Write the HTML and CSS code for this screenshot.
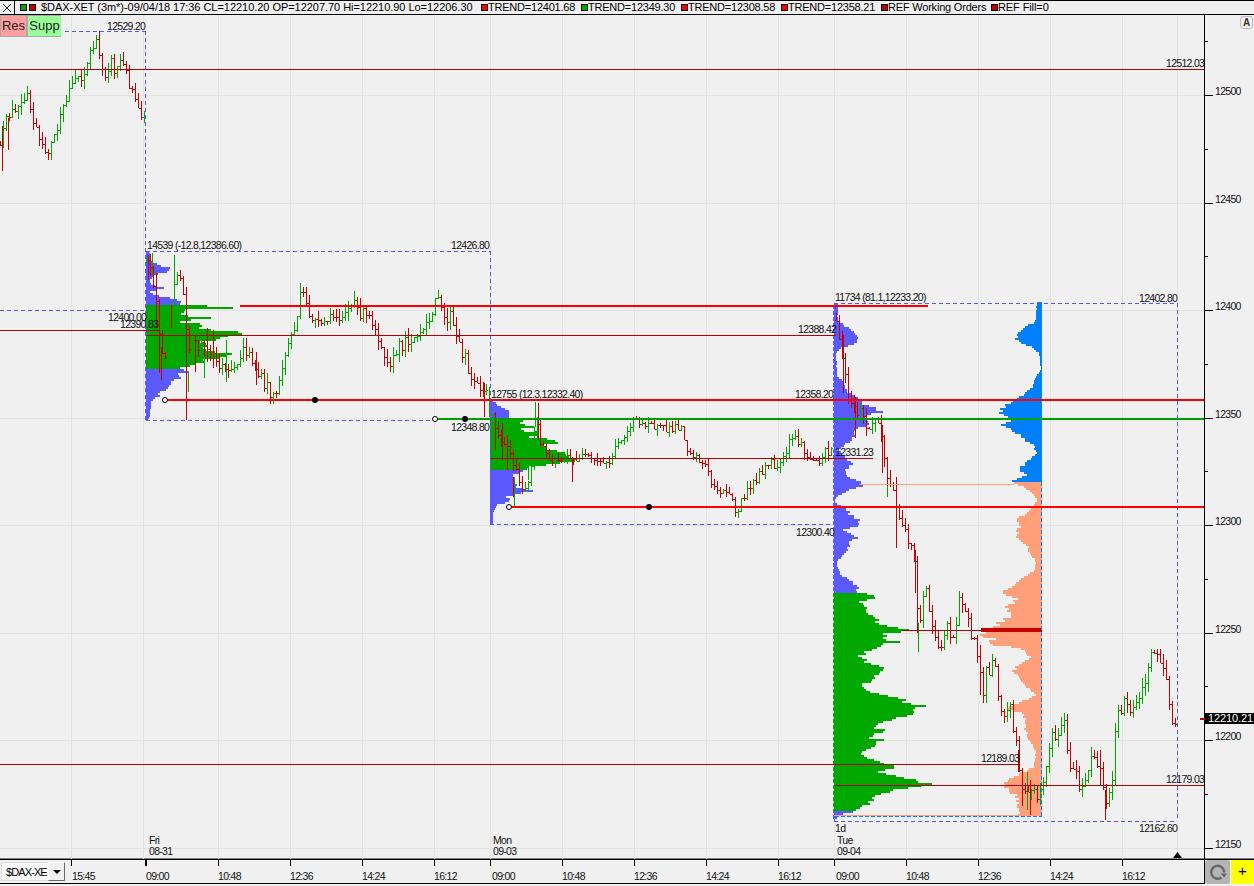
FILE: index.html
```html
<!DOCTYPE html>
<html lang="en">
<head>
    <meta charset="UTF-8">
    <title>$DAX-XET (3m*)</title>
    <link rel="stylesheet" href="styles.css">
</head>
<body>
    <div class="topbar">
        <div class="close-box">
            <svg width="10" height="10" viewBox="0 0 10 10"><path d="M1 1L9 9M9 1L1 9" stroke="#222" fill="none"/></svg>
        </div>
        <span class="swatch green first"></span>
        <span class="swatch darkred second"></span>
        <span class="legend main">$DAX-XET (3m*)-09/04/18 17:36 CL=12210.20 OP=12207.70 Hi=12210.90 Lo=12206.30</span>
        <span class="swatch red"></span><span class="legend trend">TREND=12401.68</span>
        <span class="swatch green"></span><span class="legend trend">TREND=12349.30</span>
        <span class="swatch red"></span><span class="legend trend">TREND=12308.58</span>
        <span class="swatch red"></span><span class="legend trend">TREND=12358.21</span>
        <span class="swatch darkred"></span><span class="legend orders">REF Working Orders</span>
        <span class="swatch darkred"></span><span class="legend">REF Fill=0</span>
    </div>

    <div class="chart">
        <svg id="plot" width="1254" height="844" viewBox="0 15 1254 844"></svg>
        <div class="toggles">
            <div class="toggle res">Res</div>
            <div class="toggle supp">Supp</div>
        </div>
        <div class="auto-btn">A</div>
    </div>

    <div class="bottombar">
        <div class="combo">
            <span class="combo-text">$DAX-XE</span>
            <span class="combo-arrow"></span>
        </div>
        <div class="timeaxis">
            <svg id="times" width="1138" height="23" viewBox="66 860 1138 23"></svg>
        </div>
        <div class="refresh">
            <svg width="20" height="20" viewBox="0 0 20 20">
                <path d="M13.5 15.5A6.5 6.5 0 1 1 16.2 10.5" fill="none" stroke="#666" stroke-width="2.4"/>
                <path d="M12.5 11.5L19 11.5L16.2 15.5Z" fill="#666"/>
            </svg>
        </div>
        <div class="plus">+</div>
    </div>

    <script src="script.js"></script>
</body>
</html>
```

FILE: styles.css
```css
* {
    box-sizing: border-box;
}

html, body {
    margin: 0;
    height: 100%;
    overflow: hidden;
}

body {
    width: 1254px;
    height: 886px;
    display: flex;
    flex-direction: column;
    background-color: #f0f0f0;
    font-family: "Liberation Sans", Arial, sans-serif;
    color: #000;
}

/* legend strip */
.topbar {
    height: 15px;
    flex: none;
    display: flex;
    align-items: center;
    border-top: 1px solid #000;
    border-bottom: 1px solid #000;
    font-size: 11px;
    line-height: 13px;
    white-space: nowrap;
}

.close-box {
    width: 15px;
    height: 13px;
    flex: none;
    display: flex;
    align-items: center;
    justify-content: center;
    border-right: 1px solid #000;
}

.swatch {
    width: 7px;
    height: 7px;
    flex: none;
    border: 1px solid #000;
}

.swatch.first {
    margin-left: 5px;
    margin-right: 2px;
}

.swatch.second {
    margin-right: 5px;
}

.swatch.green { background-color: #00a800; }
.swatch.red { background-color: #ff0000; }
.swatch.darkred { background-color: #c00000; }

.legend {
    letter-spacing: -0.1px;
}

.legend.main {
    width: 440px;
    letter-spacing: -0.04px;
}

.legend.trend {
    width: 93px;
    letter-spacing: -0.22px;
}

.legend.orders {
    width: 103px;
    letter-spacing: -0.2px;
}

/* chart */
.chart {
    position: relative;
    height: 844px;
    flex: none;
}

#plot {
    display: block;
}

#plot text, #times text {
    font-family: "Liberation Sans", Arial, sans-serif;
    font-size: 10.5px;
    letter-spacing: -0.7px;
    fill: #111;
}

#plot text.price-now {
    fill: #fff;
    font-size: 11px;
    letter-spacing: -0.1px;
}

.toggles {
    position: absolute;
    left: 0;
    top: 0;
    display: flex;
    height: 22px;
    padding: 1px 0 1px 1px;
    background-color: #a8a8a8;
}

.toggle {
    font-size: 13px;
    line-height: 20px;
    text-align: center;
    color: #222;
}

.toggle.res {
    width: 25px;
    margin-right: 2px;
    background-color: #ff9f9f;
}

.toggle.supp {
    width: 33px;
    background-color: #99ff99;
}

.auto-btn {
    position: absolute;
    left: 1240px;
    top: 1px;
    width: 13px;
    height: 13px;
    font-size: 10px;
    line-height: 11px;
    text-align: center;
    font-weight: bold;
    color: #333;
    border: 1px solid #bbb;
    border-radius: 3px;
}

/* bottom strip */
.bottombar {
    height: 27px;
    flex: none;
    display: flex;
    border-top: 1px solid #000;
    box-shadow: 0 -1px 0 #808080;
    background-color: #f0f0f0;
    align-items: flex-start;
}

.combo {
    width: 66px;
    height: 24px;
    flex: none;
    display: flex;
    align-items: center;
    padding: 2px 1px;
    border-bottom: 1px solid #000;
}

.combo-text {
    width: 47px;
    height: 19px;
    padding-left: 4px;
    font-size: 11px;
    line-height: 18px;
    overflow: hidden;
    letter-spacing: -0.9px;
    background-color: #fafafa;
    border: 1px solid #ddd;
    border-right: none;
    white-space: nowrap;
}

.combo-arrow {
    width: 17px;
    height: 19px;
    position: relative;
    border: 1px solid #666;
    border-top-color: #fff;
    border-left-color: #fff;
}

.combo-arrow::after {
    content: "";
    position: absolute;
    left: 4px;
    top: 7px;
    border-left: 4px solid transparent;
    border-right: 4px solid transparent;
    border-top: 4px solid #000;
}

.timeaxis {
    width: 1139px;
    height: 24px;
    flex: none;
    border-bottom: 1px solid #000;
    border-right: 1px solid #000;
}

#times {
    display: block;
}

.refresh {
    width: 25px;
    height: 24px;
    flex: none;
    display: flex;
    align-items: center;
    justify-content: center;
    background-color: #b4b4b4;
    border-radius: 3px;
}

.plus {
    width: 23px;
    height: 24px;
    flex: none;
    margin-left: 1px;
    background-color: #ffff00;
    border-radius: 2px;
    text-align: center;
    font-size: 15px;
    line-height: 22px;
}
```

FILE: script.js
```js
const NS = 'http://www.w3.org/2000/svg';
const plot = document.getElementById('plot');
const times = document.getElementById('times');

const GREEN = '#00a800';
const RED = '#c80000';
const PURE_RED = '#ff0000';
const DASH_BLUE = '#5555ff';
const PROFILE_BLUE = '#5a5aff';
const BRIGHT_BLUE = '#0080ff';
const SALMON = '#ffa07a';

let seed = 12345;
function rnd() {
    seed = (seed * 16807) % 2147483647;
    return seed / 2147483647;
}

function add(parent, tag, attrs, text) {
    const el = document.createElementNS(NS, tag);
    for (const k in attrs) el.setAttribute(k, attrs[k]);
    if (text !== undefined) el.textContent = text;
    parent.appendChild(el);
    return el;
}

function line(x1, y1, x2, y2, color, width, dash) {
    const attrs = { x1, y1, x2, y2, stroke: color, 'stroke-width': width || 1, 'shape-rendering': 'crispEdges' };
    if (dash) attrs['stroke-dasharray'] = dash;
    add(plot, 'line', attrs);
}

function label(x, y, text, cls) {
    add(plot, 'text', { x, y, class: cls || '' }, text);
}

// grid
const gridX = [71, 143, 218, 290, 362, 434, 490, 562, 634, 706, 778, 834, 906, 978, 1050, 1122, 1177];
const gridY = [95.5, 203.5, 310.5, 418.5, 525.5, 633.5, 740.5, 848.5];
gridX.forEach(x => line(x + 0.5, 15, x + 0.5, 859, '#e2e2e2'));
gridY.forEach(y => line(0, y, 1204, y, '#e2e2e2'));

// volume profiles: anchors are [y, width]
function interp(points, v) {
    for (let i = 0; i < points.length - 1; i++) {
        const a = points[i], b = points[i + 1];
        if (v >= a[0] && v <= b[0]) {
            return a[1] + (b[1] - a[1]) * (v - a[0]) / ((b[0] - a[0]) || 1);
        }
    }
    return v < points[0][0] ? points[0][1] : points[points.length - 1][1];
}

function drawProfile(anchors, x0, dir, colorOf) {
    const top = anchors[0][0], bottom = anchors[anchors.length - 1][0];
    const paths = {};
    for (let y = top; y < bottom; y += 2) {
        const w = Math.max(1, Math.round(interp(anchors, y + 1) * (0.88 + rnd() * 0.22)));
        const c = colorOf(y);
        const x = dir > 0 ? x0 : x0 - w;
        paths[c] = (paths[c] || '') + `M${x} ${y}h${w}v2h${-w}z`;
    }
    for (const c in paths) add(plot, 'path', { d: paths[c], fill: c, 'shape-rendering': 'crispEdges' });
}

drawProfile([[251, 3], [258, 4], [262, 8], [265, 12], [268, 22], [272, 22], [275, 8], [280, 4], [285, 6], [288, 19], [292, 4], [296, 12], [298, 26], [301, 30], [304, 36],
    [306, 60], [308, 88], [310, 42], [312, 35], [316, 38], [318, 60], [321, 32], [324, 50], [328, 55], [331, 80], [333, 98], [335, 92], [338, 80], [341, 55], [345, 62], [349, 55], [352, 72], [354, 85], [355, 92], [358, 70], [361, 60], [364, 55], [367, 38],
    [369, 35], [372, 40], [375, 30], [378, 36], [381, 28], [384, 25], [387, 26], [390, 20], [393, 12], [396, 14], [399, 8], [402, 5], [405, 5], [410, 4], [415, 4], [420, 2]],
    146, 1, y => (y >= 304 && y < 369 ? GREEN : PROFILE_BLUE));

drawProfile([[400, 2], [405, 8], [410, 17], [414, 20], [418, 20], [421, 32], [424, 33], [427, 42], [430, 32], [433, 50], [436, 44], [438, 36], [440, 75], [443, 66], [447, 53], [450, 56], [453, 73], [457, 86], [460, 80], [463, 73], [467, 43], [470, 40],
    [472, 30], [477, 24], [483, 24], [488, 30], [490, 45], [493, 30], [497, 17], [502, 20], [505, 7], [513, 3], [524, 3]],
    490, 1, y => (y >= 420 && y < 470 ? GREEN : PROFILE_BLUE));

drawProfile([[303, 4], [305, 5], [320, 5], [323, 8], [328, 15], [335, 26], [343, 26], [347, 10], [353, 3], [377, 4], [380, 10], [390, 13], [397, 22], [403, 30], [408, 40], [412, 48], [414, 40], [418, 30], [423, 37], [430, 23], [437, 22], [443, 15], [450, 5], [458, 13], [463, 19], [470, 13], [477, 15], [482, 27], [485, 32], [490, 17], [497, 3], [503, 2], [508, 12], [517, 20], [520, 26], [525, 26], [530, 10], [537, 26], [543, 17], [550, 15], [557, 8], [563, 3], [575, 8], [582, 20], [588, 26], [592, 26],
    [593, 37], [598, 40], [602, 26], [607, 35], [613, 37], [622, 43], [627, 58], [630, 70], [633, 58], [638, 48], [642, 62], [647, 48], [650, 37], [657, 26], [662, 35], [667, 46], [670, 52], [675, 42], [682, 35], [687, 28], [693, 43], [697, 57], [702, 73], [707, 95], [710, 87], [715, 77], [720, 58], [725, 43], [732, 50], [737, 37], [740, 48], [747, 37], [750, 32], [757, 30], [762, 52], [768, 57], [773, 47], [778, 77], [782, 90], [785, 102], [788, 80], [793, 48], [800, 40], [807, 30], [810, 24],
    [812, 20], [815, 7], [820, 2]],
    833, 1, y => (y >= 593 && y < 810 ? GREEN : PROFILE_BLUE));

drawProfile([[302, 5], [323, 7], [325, 14], [330, 19], [333, 24], [338, 26], [342, 22], [347, 10], [353, 3], [370, 1], [378, 7], [387, 10], [392, 15], [396, 21], [403, 34], [410, 45], [415, 39], [418, 29], [426, 42], [430, 33], [435, 24], [440, 17], [445, 9], [453, 5], [458, 10], [463, 17], [470, 22], [475, 15], [478, 26], [482, 28],
    [483, 29], [487, 19], [493, 10], [500, 4], [507, 10], [512, 14], [520, 26], [527, 22], [533, 25], [540, 24], [548, 14], [553, 12], [562, 6], [570, 8], [580, 21], [592, 38], [600, 25], [608, 36], [615, 31], [622, 41], [628, 50], [633, 60], [638, 53], [645, 48], [648, 21], [657, 12], [665, 21], [670, 30], [678, 21], [687, 15], [695, 6], [702, 21], [708, 38], [713, 21], [722, 15], [732, 17], [742, 11], [753, 6], [767, 8], [777, 28], [783, 41], [790, 36], [797, 25], [807, 25], [815, 25]],
    1042, -1, y => (y >= 482 ? SALMON : BRIGHT_BLUE));

add(plot, 'rect', { x: 834, y: 815, width: 208, height: 1, fill: SALMON });
add(plot, 'rect', { x: 981, y: 628, width: 61, height: 4, fill: '#c80000', 'shape-rendering': 'crispEdges' });

// price bars
let redBars = '';
let greenBars = '';

function pushBar(x, hi, lo, open, close, up) {
    const px = x + 0.5;
    let d = `M${px} ${hi}V${lo}`;
    if (open !== null) d += `M${x - 1} ${open}H${px}M${px} ${close}H${x + 2}`;
    if (up) greenBars += d; else redBars += d;
}

function drawSeries(points, step, noise, spread) {
    const first = points[0][0], last = points[points.length - 1][0];
    let prev = Math.round(points[0][1]);
    for (let x = first; x <= last; x += step) {
        const mid = interp(points, x);
        const close = Math.round(mid + (rnd() - 0.5) * noise);
        const open = prev;
        const hi = Math.round(Math.min(open, close) - rnd() * spread);
        const lo = Math.round(Math.max(open, close) + rnd() * spread);
        pushBar(x, hi, lo, open + 0.5, close + 0.5, close < open);
        prev = close;
    }
}

drawSeries([[0, 145], [4, 125], [10, 115], [15, 110], [23, 105], [27, 98], [33, 120], [37, 135], [42, 150], [50, 148], [58, 125], [65, 105], [72, 78], [80, 75], [85, 72], [90, 50], [95, 42], [100, 60], [105, 72], [110, 60], [115, 72], [120, 60], [125, 70], [130, 85], [135, 95], [140, 112], [145, 110]], 3, 13, 9);

drawSeries([[147, 262], [152, 275], [156, 300], [160, 345], [164, 365], [170, 320], [174, 290], [176, 268], [180, 278], [184, 300], [187, 345], [192, 340], [200, 345], [210, 355], [220, 365], [228, 375], [235, 372], [240, 355], [245, 350], [252, 360], [258, 375], [265, 385], [272, 393], [278, 390], [283, 360], [290, 337], [296, 322], [300, 298], [303, 296], [308, 312], [313, 317], [320, 330], [325, 320], [330, 320], [335, 315], [340, 315], [345, 310], [352, 305], [358, 310], [365, 316], [372, 320], [380, 340], [385, 355], [392, 363], [397, 350], [405, 340], [412, 337], [420, 337], [428, 325], [435, 295], [440, 308], [445, 320], [450, 315], [455, 335], [460, 350], [465, 355], [470, 375], [475, 385], [480, 385], [486, 395], [488, 405]], 3, 13, 9);

drawSeries([[492, 415], [500, 440], [510, 450], [515, 470], [520, 485], [525, 490], [530, 480], [535, 420], [540, 440], [545, 452], [550, 458], [555, 460], [565, 458], [572, 460], [580, 456], [590, 460], [600, 463], [608, 463], [612, 455], [620, 438], [628, 430], [632, 418], [640, 425], [650, 418], [655, 428], [665, 430], [675, 428], [680, 424], [688, 450], [695, 455], [705, 465], [712, 485], [720, 490], [730, 496], [737, 515], [741, 500], [748, 490], [755, 480], [762, 470], [770, 462], [778, 470], [785, 455], [790, 440], [795, 437], [803, 450], [812, 462], [820, 458], [825, 448], [829, 455], [832, 445]], 3, 9, 7);

drawSeries([[836, 320], [838, 340], [840, 345], [843, 365], [848, 395], [852, 410], [856, 412], [860, 410], [865, 425], [870, 430], [875, 418], [880, 425], [882, 445], [887, 478], [893, 490], [896, 510], [900, 515], [905, 530], [908, 545], [912, 540], [915, 570], [917, 605], [918, 635], [922, 600], [927, 590], [930, 620], [933, 635], [937, 640], [940, 650], [943, 640], [945, 625], [948, 625], [952, 640], [955, 635], [958, 598], [963, 600], [967, 615], [970, 635], [975, 645], [980, 670], [983, 690], [985, 670], [988, 675], [993, 660], [997, 665], [998, 700], [1000, 710], [1005, 715], [1010, 705], [1013, 730], [1017, 745], [1018, 765], [1022, 790], [1027, 790], [1030, 795], [1033, 785], [1037, 800], [1040, 790], [1044, 775], [1048, 755], [1050, 735], [1056, 740], [1059, 730], [1063, 715], [1065, 730], [1068, 760], [1072, 775], [1075, 770], [1078, 785], [1083, 790], [1088, 770], [1092, 755], [1095, 760], [1100, 770], [1103, 790], [1105, 810], [1108, 800], [1112, 780], [1115, 730], [1118, 715], [1125, 700], [1130, 710], [1135, 700], [1140, 695], [1145, 680], [1150, 652], [1153, 650], [1160, 660], [1165, 675], [1168, 695], [1172, 722], [1176, 724]], 3, 10, 9);

// the long bars that stand out from the rest
[[2, 126, 171, 0], [8, 118, 150, 0], [148, 255, 280, 0], [152, 253, 275, 1], [156, 273, 327, 0], [159, 315, 373, 0], [161, 347, 380, 0], [171, 305, 328, 0], [174, 255, 300, 1], [186, 307, 420, 0], [188, 373, 392, 1], [207, 328, 362, 0], [195, 335, 372, 0], [204, 345, 378, 1], [213, 330, 368, 0], [226, 340, 382, 1], [256, 352, 385, 0],
 [484, 383, 417, 0], [489, 387, 417, 1], [495, 420, 450, 0], [502, 423, 460, 0], [507, 435, 470, 0], [513, 477, 497, 0], [514, 477, 507, 1], [528, 453, 480, 1], [535, 402, 427, 1], [538, 403, 440, 0], [572, 457, 482, 0],
 [843, 335, 393, 0], [855, 397, 438, 0], [882, 425, 473, 0], [887, 458, 497, 1], [896, 477, 548, 0], [915, 550, 593, 0], [917, 577, 633, 0], [918, 623, 652, 1], [980, 645, 695, 0], [1018, 750, 772, 0], [1022, 775, 806, 0], [1027, 772, 810, 1], [1030, 780, 815, 0], [1100, 750, 786, 0], [1105, 790, 820, 0], [1115, 723, 752, 1]
].forEach(b => pushBar(b[0], b[1], b[2], null, null, b[3] === 1));

add(plot, 'path', { d: greenBars, stroke: GREEN, fill: 'none', 'shape-rendering': 'crispEdges' });
add(plot, 'path', { d: redBars, stroke: RED, fill: 'none', 'shape-rendering': 'crispEdges' });

// dashed range boxes
line(65, 31.5, 145, 31.5, DASH_BLUE, 1, '4 3');
line(145.5, 31, 145.5, 420, DASH_BLUE, 1, '4 3');
line(146, 251.5, 490, 251.5, DASH_BLUE, 1, '4 3');
line(146, 420.5, 435, 420.5, DASH_BLUE, 1, '4 3');
line(490.5, 251, 490.5, 524, DASH_BLUE, 1, '4 3');
line(0, 310.5, 146, 310.5, DASH_BLUE, 1, '4 3');
line(490, 524.5, 833, 524.5, DASH_BLUE, 1, '4 3');
line(834, 303.5, 1177, 303.5, DASH_BLUE, 1, '4 3');
line(1177.5, 303, 1177.5, 821, DASH_BLUE, 1, '4 3');
line(834, 821.5, 1177, 821.5, DASH_BLUE, 1, '4 3');
line(833.5, 303, 833.5, 821, '#fff', 1, '2 4');
line(835, 816.5, 1042, 816.5, BRIGHT_BLUE, 1, '4 2');
line(1041.5, 482, 1041.5, 816, BRIGHT_BLUE, 1, '4 2');

// level lines
const THIN = '#b40000';
line(0, 69.5, 1204, 69.5, THIN);
line(0, 330.5, 159, 330.5, THIN);
line(147, 335.5, 836, 335.5, THIN);
line(491, 458.5, 873, 458.5, THIN);
line(902, 630.5, 981, 630.5, THIN);
line(0, 764.5, 1020, 764.5, THIN);
line(835, 785.5, 1204, 785.5, THIN);
line(859, 484.5, 1014, 484.5, SALMON);
line(240, 306, 928, 306, PURE_RED, 2);
line(165, 400, 1204, 400, PURE_RED, 2);
line(509, 507, 1204, 507, PURE_RED, 2);
line(435, 419, 1204, 419, '#00a000', 2);

// drag handles on the trend lines
[[165, 400], [435, 419], [509, 507]].forEach(p => add(plot, 'circle', { cx: p[0], cy: p[1], r: 2.5, fill: '#fff', stroke: '#000' }));
[[315, 400], [465, 419], [649, 507]].forEach(p => add(plot, 'circle', { cx: p[0], cy: p[1], r: 3, fill: '#000' }));

// labels
[[107, 30, '12529.20'], [147, 249, '14539 (-12.8,12386.60)'], [451, 249, '12426.80'], [108, 321, '12400.00'], [120, 328, '12390.83'],
 [491, 398, '12755 (12.3,12332.40)'], [451, 431, '12348.80'], [796, 536, '12300.40'], [798, 333, '12388.42'], [795, 398, '12358.20'],
 [835, 456, '12331.23'], [835, 301, '11734 (81.1,12233.20)'], [1139, 302, '12402.80'], [1166, 67, '12512.03'], [981, 762, '12189.03'],
 [1166, 783, '12179.03'], [1139, 832, '12162.60'], [835, 832, '1d'], [837, 844, 'Tue'], [837, 855, '09-04'],
 [149, 844, 'Fri'], [149, 855, '08-31'], [493, 844, 'Mon'], [493, 855, '09-03']
].forEach(l => label(l[0], l[1], l[2]));

// price axis
line(1204.5, 15, 1204.5, 859, '#000');
[[95.5, '12500'], [203.5, '12450'], [310.5, '12400'], [418.5, '12350'], [525.5, '12300'], [633.5, '12250'], [740.5, '12200'], [848.5, '12150']].forEach(t => {
    line(1204, t[0], 1213, t[0], '#000');
    line(1204, t[0] - 54, 1208, t[0] - 54, '#000');
    label(1215, t[0] - 0.5, t[1]);
});
line(1204, 794.5, 1208, 794.5, '#000');

line(1200, 718.5, 1205, 718.5, '#c80000', 2);
add(plot, 'rect', { x: 1205, y: 713, width: 49, height: 11, fill: '#000' });
label(1208, 722, '12210.21', 'price-now');
add(plot, 'path', { d: 'M1177.5 852L1182 858H1173Z', fill: '#000' });

// time axis
[[71, '15:45', 72], [145, '09:00', 146], [218, '10:48', 218], [290, '12:36', 290], [362, '14:24', 362], [434, '16:12', 434],
 [490, '09:00', 492], [562, '10:48', 562], [634, '12:36', 634], [706, '14:24', 706], [778, '16:12', 778],
 [834, '09:00', 836], [906, '10:48', 906], [978, '12:36', 978], [1050, '14:24', 1050], [1122, '16:12', 1122]
].forEach(t => {
    add(times, 'line', { x1: t[0] + 0.5, y1: 860, x2: t[0] + 0.5, y2: 866, stroke: '#000', 'shape-rendering': 'crispEdges' });
    add(times, 'text', { x: t[2], y: 880 }, t[1]);
});
add(times, 'line', { x1: 146.5, y1: 860, x2: 146.5, y2: 866, stroke: '#000', 'shape-rendering': 'crispEdges' });
```
